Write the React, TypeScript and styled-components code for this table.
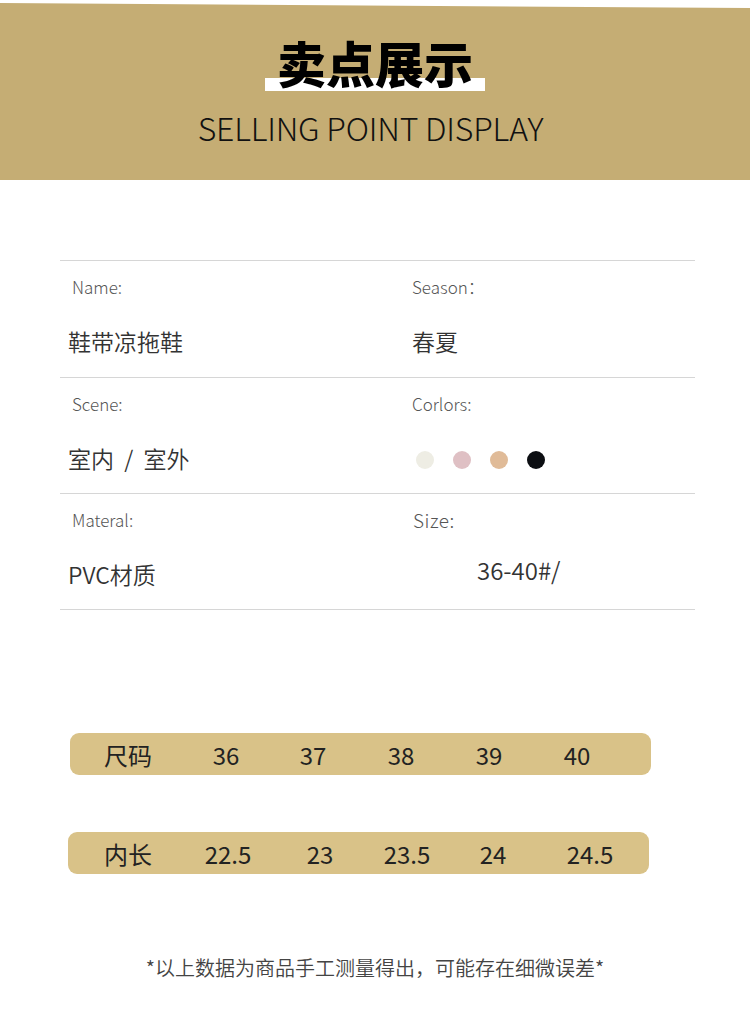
import React from "react";
import styled, { createGlobalStyle } from "styled-components";

const Global = createGlobalStyle`
  html, body { margin: 0; padding: 0; background: #fff; }
  body { font-family: "Noto Sans CJK SC", "Noto Sans", sans-serif; }
  * { box-sizing: border-box; }
`;

const Page = styled.div`
  width: 750px;
  height: 1032px;
  background: #fff;
  display: flex;
  flex-direction: column;
`;

const Header = styled.header`
  height: 180px;
  background: #c5ad74;
  clip-path: polygon(0 3px, 100% 8px, 100% 100%, 0 100%);
  display: flex;
  flex-direction: column;
  align-items: center;
  padding-top: 33px;
`;

const TitleWrap = styled.div`
  position: relative;
  padding: 0 12px;
  height: 58px;
  display: flex;
  justify-content: center;
  &::before {
    content: "";
    position: absolute;
    left: 0;
    right: 0;
    top: 45px;
    height: 13px;
    background: #fff;
  }
`;

const Title = styled.h1`
  position: relative;
  margin: 0;
  font-size: 49px;
  line-height: 58px;
  font-weight: 900;
  color: #000;
`;

const Subtitle = styled.div`
  margin-top: 16px;
  margin-right: 9px;
  font-size: 32px;
  line-height: 40px;
  font-weight: 300;
  color: #111;
  letter-spacing: -0.2px;
`;

const Table = styled.section`
  margin: 80px 55px 0 60px;
  border-top: 1px solid #d6d6d6;
`;

const Row = styled.div<{ $h: number }>`
  display: grid;
  grid-template-columns: 352px 1fr;
  height: ${(p) => p.$h}px;
  border-bottom: 1px solid #d6d6d6;
`;

const Cell = styled.div`
  display: flex;
  flex-direction: column;
  padding-top: 15px;
`;

const Label = styled.div<{ $big?: boolean; $pad?: number }>`
  font-size: ${(p) => (p.$big ? 19 : 17)}px;
  line-height: 22px;
  font-weight: 300;
  color: #555;
  padding-left: ${(p) => p.$pad ?? 12}px;
  letter-spacing: ${(p) => (p.$big ? 0.5 : 0)}px;
`;

const Value = styled.div<{ $shift?: number; $top?: number; $size?: number }>`
  margin-top: ${(p) => p.$top ?? 28}px;
  font-size: ${(p) => p.$size ?? 23}px;
  line-height: 30px;
  font-weight: 350;
  color: #333;
  white-space: pre;
  padding-left: ${(p) => p.$shift ?? 8}px;
`;

const Dots = styled.div`
  margin-top: 36px;
  display: flex;
  gap: 19px;
  padding-left: 4px;
`;

const Dot = styled.span<{ $c: string }>`
  width: 18px;
  height: 18px;
  border-radius: 50%;
  background: ${(p) => p.$c};
`;

const Bars = styled.section`
  margin-top: 123px;
  display: flex;
  flex-direction: column;
  gap: 57px;
`;

const Bar = styled.div<{ $left: number; $cols: string }>`
  margin-left: ${(p) => p.$left}px;
  width: 581px;
  height: 42px;
  border-radius: 9px;
  background: #d9c288;
  display: grid;
  grid-template-columns: ${(p) => p.$cols};
  align-items: center;
  justify-items: center;
  font-size: 24px;
  color: #222;
`;

const Note = styled.p`
  margin: 82px 0 0 0;
  text-align: center;
  font-size: 20px;
  line-height: 24px;
  font-weight: 350;
  color: #444;
`;

const colors = ["#eeede4", "#dfc0c4", "#e0bb98", "#0c0e12"];

export default function App() {
  return (
    <Page>
      <Global />
      <Header>
        <TitleWrap>
          <Title>卖点展示</Title>
        </TitleWrap>
        <Subtitle>SELLING POINT DISPLAY</Subtitle>
      </Header>

      <Table>
        <Row $h={117}>
          <Cell>
            <Label>Name:</Label>
            <Value>鞋带凉拖鞋</Value>
          </Cell>
          <Cell>
            <Label $pad={0}>Season：</Label>
            <Value $shift={0}>春夏</Value>
          </Cell>
        </Row>
        <Row $h={116}>
          <Cell>
            <Label>Scene:</Label>
            <Value>{"室内  /  室外"}</Value>
          </Cell>
          <Cell>
            <Label $pad={0}>Corlors:</Label>
            <Dots>
              {colors.map((c) => (
                <Dot key={c} $c={c} />
              ))}
            </Dots>
          </Cell>
        </Row>
        <Row $h={116}>
          <Cell>
            <Label>Materal:</Label>
            <Value>PVC材质</Value>
          </Cell>
          <Cell>
            <Label $big $pad={1}>Size:</Label>
            <Value $shift={65} $top={24} $size={24}>36-40#/</Value>
          </Cell>
        </Row>
      </Table>

      <Bars>
        <Bar $left={70} $cols="116px 80px 94px 82px 94px 82px">
          <span>尺码</span>
          <span>36</span>
          <span>37</span>
          <span>38</span>
          <span>39</span>
          <span>40</span>
        </Bar>
        <Bar $left={68} $cols="120px 80px 104px 70px 102px 92px">
          <span>内长</span>
          <span>22.5</span>
          <span>23</span>
          <span>23.5</span>
          <span>24</span>
          <span>24.5</span>
        </Bar>
      </Bars>

      <Note>*以上数据为商品手工测量得出，可能存在细微误差*</Note>
    </Page>
  );
}
